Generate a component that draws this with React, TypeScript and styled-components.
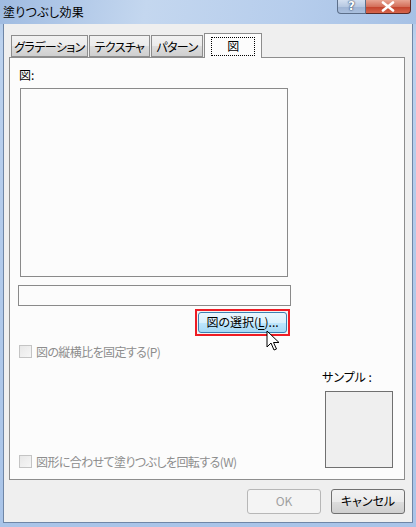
import React from "react";
import styled, { createGlobalStyle } from "styled-components";

const GlobalStyle = createGlobalStyle`
    html, body {
        margin: 0;
        padding: 0;
        background: #ffffff;
    }
    body {
        font-family: "Noto Sans CJK JP", "Noto Sans", sans-serif;
        font-size: 12px;
        font-feature-settings: "palt";
        color: #000000;
    }
`

const tabs = [
    { label: "グラデーション", width: 77 },
    { label: "テクスチャ", width: 61 },
    { label: "パターン", width: 52 },
    { label: "図", width: 58 },
];

const CursorIcon = () => (
    <svg width="14" height="22" viewBox="0 0 14 22">
        <path d="M1 1 L1 17 L5 13 L8 20 L10.5 19 L7.5 12.5 L13 12.5 Z" fill="#ffffff" stroke="#000000" strokeWidth="1" strokeLinejoin="round" />
    </svg>
);

const Checkbox: React.FC<{ label: string }> = ({ label }) => (
    <CheckRow>
        <CheckBox />
        <CheckLabel>{label}</CheckLabel>
    </CheckRow>
);

const App: React.FC = () => {
    return (
        <>
            <GlobalStyle />
            <Window>
                <TitleBar>
                    <Title>塗りつぶし効果</Title>
                    <CaptionButtons>
                        <HelpButton>?</HelpButton>
                        <CloseButton>
                            <svg width="14" height="11" viewBox="0 0 14 11">
                                <path d="M2 1.5 L12 9.5 M12 1.5 L2 9.5" stroke="#ffffff" strokeWidth="2.6" strokeLinecap="round" />
                            </svg>
                        </CloseButton>
                    </CaptionButtons>
                </TitleBar>
                <Client>
                    <TabStrip>
                        {tabs.map((t, i) => (
                            <Tab key={t.label} active={i === 3} width={t.width}>
                                {i === 3 ? <FocusRect>{t.label}</FocusRect> : t.label}
                            </Tab>
                        ))}
                    </TabStrip>
                    <Panel>
                        <PictureLabel>図:</PictureLabel>
                        <PictureBox />
                        <FileField />
                        <ButtonRow>
                            <SelectButton>
                                <span>図の選択(<u>L</u>)...</span>
                                <CursorSpot>
                                    <CursorIcon />
                                </CursorSpot>
                            </SelectButton>
                        </ButtonRow>
                        <Checkbox label="図の縦横比を固定する(P)" />
                        <BottomRow>
                            <Checkbox label="図形に合わせて塗りつぶしを回転する(W)" />
                            <SampleColumn>
                                <SampleLabel>サンプル :</SampleLabel>
                                <SampleBox />
                            </SampleColumn>
                        </BottomRow>
                    </Panel>
                    <Footer>
                        <DialogButton disabled>OK</DialogButton>
                        <DialogButton>キャンセル</DialogButton>
                    </Footer>
                </Client>
            </Window>
        </>
    );
}

export default App;

const Window = styled.div`
    width: 416px;
    height: 527px;
    display: flex;
    flex-direction: column;
    background: linear-gradient(to bottom, #a8c3e6 0%, #bcd2ee 8%, #b3cbeb 40%, #a9c4e8 100%);
    box-sizing: border-box;
    overflow: hidden;
`

const TitleBar = styled.div`
    height: 24px;
    display: flex;
    align-items: flex-start;
    justify-content: space-between;
    padding: 0 5px 0 3px;
    background: linear-gradient(100deg, #9fbbe1 0%, #c4d7ef 35%, #b6cdec 70%, #a6c1e5 100%);
`

const Title = styled.div`
    font-size: 12px;
    line-height: 23px;
    color: #000000;
    letter-spacing: 0.3px;
`

const CaptionButtons = styled.div`
    display: flex;
    height: 15px;
`

const HelpButton = styled.div`
    width: 29px;
    height: 14px;
    box-sizing: border-box;
    border: 1px solid #5c6f8a;
    border-top: none;
    border-radius: 0 0 0 4px;
    background: linear-gradient(to bottom, #d3dff0 0%, #b7c9e2 50%, #9fb4d4 51%, #aac0de 100%);
    color: #ffffff;
    font-family: "DejaVu Sans", sans-serif;
    font-weight: bold;
    font-size: 12px;
    line-height: 13px;
    text-align: center;
    text-shadow: 0 0 2px #233a5a, 0 0 1px #233a5a;
`

const CloseButton = styled.div`
    width: 45px;
    height: 14px;
    box-sizing: border-box;
    border: 1px solid #5a2a26;
    border-top: none;
    border-left: none;
    border-radius: 0 0 4px 0;
    background: linear-gradient(to bottom, #e8a493 0%, #d4705b 50%, #c2402b 51%, #d6664c 100%);
    display: flex;
    align-items: center;
    justify-content: center;
`

const Client = styled.div`
    flex: 1;
    margin: 0 3px 4px 3px;
    border: 1px solid #6f86a6;
    border-top: none;
    background: #efefef;
    display: flex;
    flex-direction: column;
    padding: 9px 6px 0 5px;
    box-sizing: border-box;
`

const TabStrip = styled.div`
    display: flex;
    align-items: flex-end;
    height: 24px;
    padding-left: 2px;
    position: relative;
    z-index: 1;
`

const Tab = styled.div<{ active?: boolean; width: number }>`
    box-sizing: border-box;
    width: ${p => p.width}px;
    height: ${p => p.active ? "25px" : "22px"};
    margin-right: ${p => p.active ? "0" : "1px"};
    margin-bottom: ${p => p.active ? "-1px" : "0"};
    padding: ${p => p.active ? "3px 6px 0" : "2px 0 0"};
    border: 1px solid #8d8d8d;
    border-bottom: ${p => p.active ? "none" : "1px solid #8d8d8d"};
    background: ${p => p.active ? "#fcfcfc" : "linear-gradient(to bottom, #f2f2f2 0%, #ebebeb 50%, #dddddd 51%, #cfcfcf 100%)"};
    font-size: 12px;
    line-height: 17px;
    letter-spacing: -0.6px;
    text-align: center;
    color: #000000;
    white-space: nowrap;
`

const FocusRect = styled.div`
    border: 1px dotted #000000;
    height: 17px;
    text-align: center;
    line-height: 16px;
`

const Panel = styled.div`
    height: 423px;
    width: 396px;
    box-sizing: border-box;
    border: 1px solid #8d8d8d;
    background: #fcfcfc;
    display: flex;
    flex-direction: column;
    padding: 9px 11px 11px 8px;
`

const PictureLabel = styled.div`
    font-size: 12px;
    line-height: 16px;
    margin-left: 1px;
`

const PictureBox = styled.div`
    width: 268px;
    height: 189px;
    box-sizing: border-box;
    margin: 5px 0 0 2px;
    border: 1px solid #8a8a8a;
    background: #fcfcfc;
`

const FileField = styled.div`
    width: 273px;
    height: 21px;
    box-sizing: border-box;
    margin-top: 8px;
    border: 1px solid #8a8a8a;
    background: #fcfcfc;
`

const ButtonRow = styled.div`
    width: 272px;
    display: flex;
    justify-content: flex-end;
    margin-top: 3px;
`

const SelectButton = styled.div`
    position: relative;
    width: 95px;
    height: 27px;
    box-sizing: border-box;
    border: 2px solid #ee1c24;
    padding: 1px;
    background: #f3f3f3;
    span {
        display: block;
        height: 100%;
        box-sizing: border-box;
        border: 1px solid #3c7fb1;
        border-radius: 3px;
        background: linear-gradient(to bottom, #eaf6fd 0%, #d9f0fc 50%, #bee6fd 51%, #a7d9f5 100%);
        font-size: 12px;
        line-height: 18px;
        text-align: center;
        color: #000000;
    }
    u {
        text-decoration: underline;
        text-underline-offset: 2px;
    }
`

const CursorSpot = styled.div`
    position: absolute;
    left: 69px;
    top: 19px;
    line-height: 0;
`

const CheckRow = styled.div`
    display: flex;
    align-items: center;
    height: 15px;
    margin-top: 8px;
    margin-left: 1px;
`

const CheckBox = styled.div`
    width: 13px;
    height: 13px;
    box-sizing: border-box;
    border: 1px solid #c4c4c4;
    background: linear-gradient(135deg, #e8e8e8 0%, #f6f6f6 100%);
    margin-right: 4px;
`

const CheckLabel = styled.div`
    font-size: 12px;
    line-height: 15px;
    letter-spacing: -0.6px;
    color: #8d8d8d;
    white-space: nowrap;
`

const BottomRow = styled.div`
    flex: 1;
    display: flex;
    align-items: flex-end;
    justify-content: space-between;
    ${CheckRow} {
        margin-top: 0;
        margin-bottom: -1px;
    }
`

const SampleColumn = styled.div`
    display: flex;
    flex-direction: column;
    align-items: flex-start;
`

const SampleLabel = styled.div`
    font-size: 12px;
    line-height: 16px;
    margin-left: -3px;
    margin-bottom: 6px;
    white-space: nowrap;
`

const SampleBox = styled.div`
    width: 68px;
    height: 77px;
    box-sizing: border-box;
    border: 1px solid #707070;
    background-color: #efefef;
    background-image: radial-gradient(#f8f8f8 0.6px, transparent 0.7px);
    background-size: 2px 2px;
`

const Footer = styled.div`
    display: flex;
    justify-content: flex-end;
    gap: 10px;
    padding-top: 9px;
    width: 396px;
`

const DialogButton = styled.div<{ disabled?: boolean }>`
    width: 74px;
    height: 25px;
    box-sizing: border-box;
    border: 1px solid ${p => p.disabled ? "#b7b7b7" : "#707070"};
    border-radius: 3px;
    background: ${p => p.disabled ? "#f4f4f4" : "linear-gradient(to bottom, #f2f2f2 0%, #ebebeb 50%, #dddddd 51%, #cfcfcf 100%)"};
    color: ${p => p.disabled ? "#a0a0a0" : "#000000"};
    font-size: 12px;
    line-height: 22px;
    text-align: center;
`
